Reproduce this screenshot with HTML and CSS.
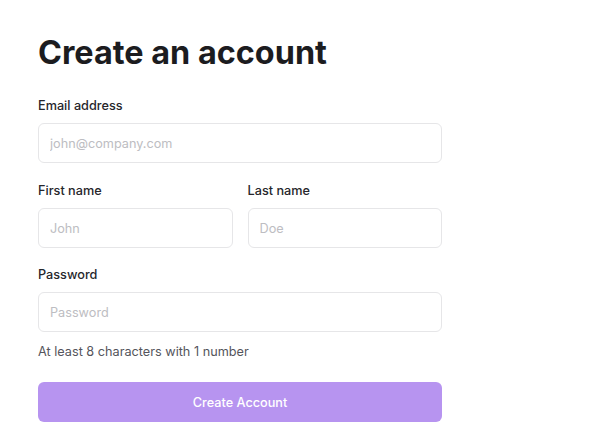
FILE: index.html
```html
<!DOCTYPE html>
<html lang="en">
<head>
<meta charset="utf-8">
<title>Create an account</title>
<link rel="stylesheet" href="styles.css">
</head>
<body>
<main class="page">
  <h1 class="title">Create an account</h1>
  <form class="form">
    <div class="field">
      <label class="label" for="email">Email address</label>
      <input class="input" id="email" type="email" placeholder="john@company.com">
    </div>
    <div class="row">
      <div class="field">
        <label class="label" for="first">First name</label>
        <input class="input" id="first" type="text" placeholder="John">
      </div>
      <div class="field">
        <label class="label" for="last">Last name</label>
        <input class="input" id="last" type="text" placeholder="Doe">
      </div>
    </div>
    <div class="field">
      <label class="label" for="pw">Password</label>
      <input class="input" id="pw" type="password" placeholder="Password">
      <p class="hint">At least 8 characters with 1 number</p>
    </div>
    <button class="button" type="button">Create Account</button>
  </form>
</main>
</body>
</html>
```
FILE: styles.css
```css
* { box-sizing: border-box; }
html, body { margin: 0; padding: 0; background: #ffffff; }
body {
  font-family: Inter, "Liberation Sans", Arial, sans-serif;
  color: #1c1c1f;
}
.page {
  width: 404px;
  margin-left: 38px;
  padding-top: 33px;
}
.title {
  margin: 0 0 22px;
  font-size: 32.4px;
  line-height: 40px;
  font-weight: 700;
  letter-spacing: 0;
  color: #1c1c1f;
}
.form {
  display: flex;
  flex-direction: column;
  gap: 16px;
}
.row {
  display: grid;
  grid-template-columns: 1fr 1fr;
  gap: 15px;
  margin-top: 1px;
}
.field {
  display: flex;
  flex-direction: column;
}
.label {
  font-size: 12.7px;
  line-height: 20px;
  font-weight: 500;
  color: #26262b;
  padding-top: 1px;
  margin-bottom: 7px;
}
.input {
  height: 40px;
  width: 100%;
  border: 1px solid #e6e6e8;
  border-radius: 6px;
  padding: 0 11px;
  font-family: inherit;
  font-size: 12.7px;
  color: #1c1c1f;
  background: #fff;
  outline: none;
}
.input::placeholder { color: #bdbdc2; }
.hint {
  margin: 10px 0 4px;
  font-size: 12.7px;
  line-height: 20px;
  color: #55555c;
}
.button {
  height: 40px;
  width: 100%;
  border: none;
  border-radius: 6px;
  background: #b794f0;
  color: #ffffff;
  font-family: inherit;
  font-size: 12.7px;
  font-weight: 500;
}
```
